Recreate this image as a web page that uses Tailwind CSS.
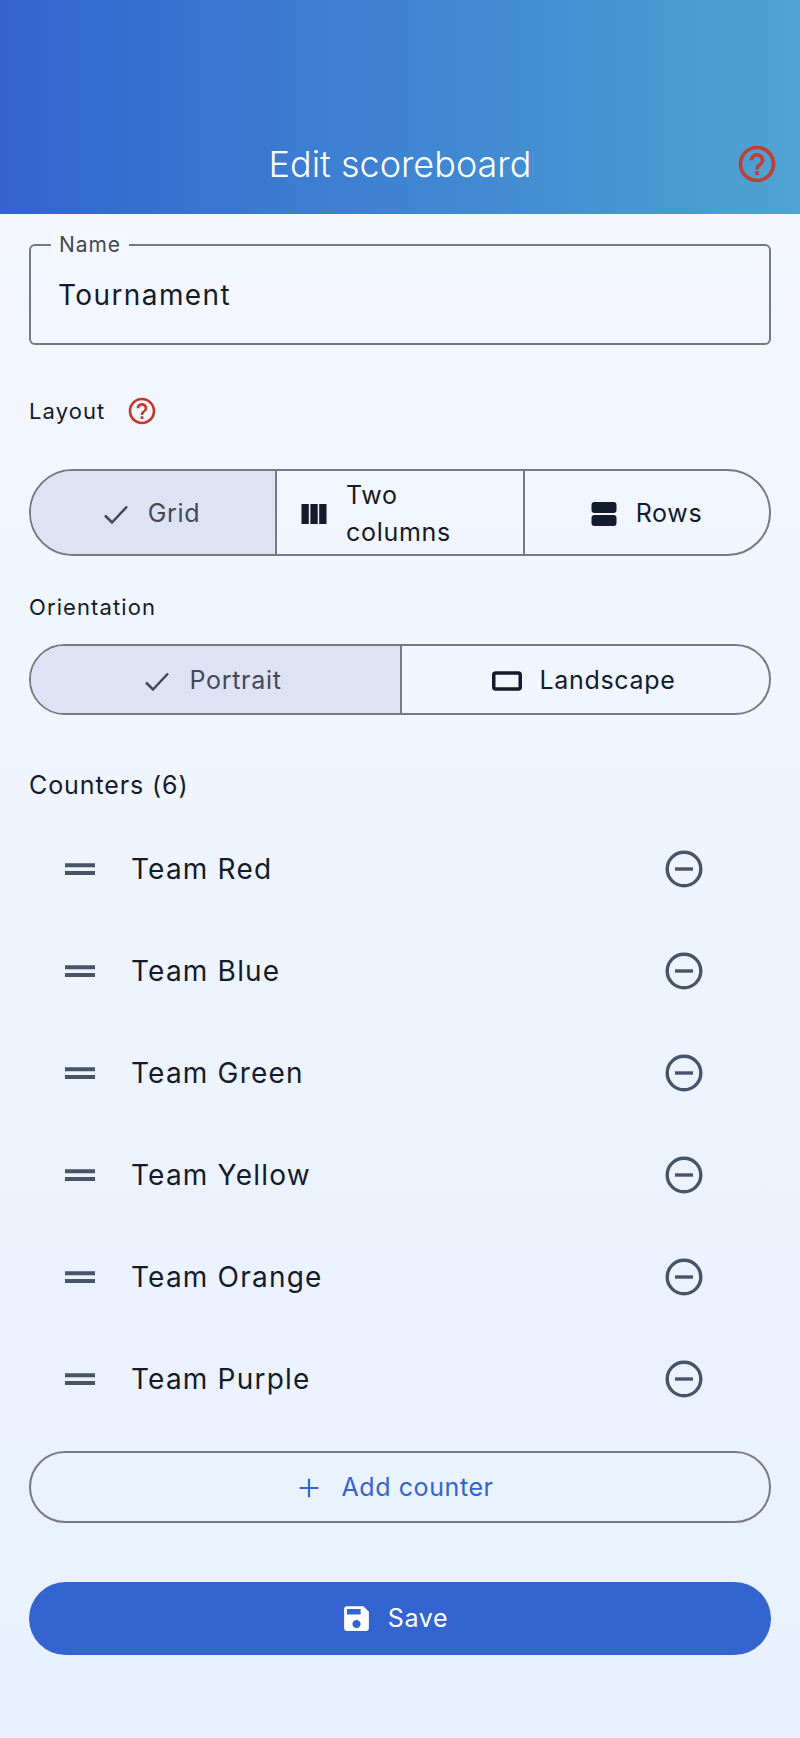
<!DOCTYPE html>
<html lang="en">
<head>
    <meta charset="UTF-8">
    <meta name="viewport" content="width=device-width, initial-scale=1.0">
    <title>Edit scoreboard</title>
    <script src="https://cdn.jsdelivr.net/npm/@tailwindcss/browser@4"></script>
</head>
<body class="w-[800px] h-[1738px] overflow-hidden flex flex-col bg-gradient-to-b from-[#f6f8ff] to-[#e8f1fd] font-['Inter',sans-serif] text-[#141b2c]">

    <!-- Header -->
    <header class="relative h-[214px] shrink-0 bg-gradient-to-r from-[#3463d0] to-[#4fa3d2] flex items-end justify-center pb-[22px]">
        <h1 class="text-[36px] leading-[56px] font-light text-white">Edit scoreboard</h1>
        <svg class="absolute right-[21px] top-[142px] w-[44px] h-[44px]" viewBox="0 0 24 24" fill="#bf3f35">
            <path d="M11 18h2v-2h-2v2zm1-16C6.48 2 2 6.48 2 12s4.48 10 10 10 10-4.48 10-10S17.52 2 12 2zm0 18c-4.41 0-8-3.59-8-8s3.59-8 8-8 8 3.59 8 8-3.59 8-8 8zm0-14c-2.21 0-4 1.79-4 4h2c0-1.1.9-2 2-2s2 .9 2 2c0 2-3 1.75-3 5h2c0-2.25 3-2.5 3-5 0-2.21-1.79-4-4-4z"/>
        </svg>
    </header>

    <main class="px-[29px] flex flex-col">
        <!-- Name field -->
        <div class="relative mt-[30px] h-[101px] border-2 border-[#767a83] rounded-[6px] flex items-center pl-[27px] text-[28px] tracking-[1.4px]">
            <span class="absolute left-[20px] top-[-13px] px-[8px] bg-[#f5f8ff] text-[21px] leading-[24px] tracking-[0.9px] text-[#444955]">Name</span>
            Tournament
        </div>

        <!-- Layout -->
        <div class="flex items-center mt-[46px] h-[40px]">
            <span class="text-[22px] tracking-[1.1px]">Layout</span>
            <svg class="ml-[21px] w-[32px] h-[32px]" viewBox="0 0 24 24" fill="#c0392b">
                <path d="M11 18h2v-2h-2v2zm1-16C6.48 2 2 6.48 2 12s4.48 10 10 10 10-4.48 10-10S17.52 2 12 2zm0 18c-4.41 0-8-3.59-8-8s3.59-8 8-8 8 3.59 8 8-3.59 8-8 8zm0-14c-2.21 0-4 1.79-4 4h2c0-1.1.9-2 2-2s2 .9 2 2c0 2-3 1.75-3 5h2c0-2.25 3-2.5 3-5 0-2.21-1.79-4-4-4z"/>
            </svg>
        </div>

        <div class="mt-[38px] h-[87px] grid grid-cols-3 border-2 border-[#767a83] rounded-full overflow-hidden text-[25px] tracking-[0.7px]">
            <div class="flex items-center justify-center gap-[16px] pt-[2px] pr-[6px] bg-[#dde2f5] text-[#444955] border-r-2 border-[#767a83]">
                <svg class="w-[32px] h-[32px]" viewBox="0 0 32 32" fill="none" stroke="#444955" stroke-width="2.500"><path d="M5 17.500l7 7L27 8.500"/></svg>
                Grid
            </div>
            <div class="flex items-center gap-[16px] pt-[2px] pl-[21px] leading-[37px]">
                <svg class="w-[32px] h-[32px] shrink-0" viewBox="0 0 32 32" fill="#141b2c"><path d="M3.500 6h7.300v20H3.500zM12.400 6h7.300v20h-7.300zM21.200 6h7.300v20h-7.300z"/></svg>
                <span>Two<br>columns</span>
            </div>
            <div class="flex items-center justify-center gap-[16px] pt-[2px] pr-[4px] border-l-2 border-[#767a83]">
                <svg class="w-[32px] h-[32px]" viewBox="0 0 32 32" fill="#141b2c"><rect x="3.500" y="4" width="25" height="11" rx="3"/><rect x="3.500" y="17" width="25" height="11" rx="3"/></svg>
                Rows
            </div>
        </div>

        <!-- Orientation -->
        <div class="mt-[36px] h-[30px] flex items-center text-[22px] tracking-[1.1px]">Orientation</div>
        <div class="mt-[22px] h-[71px] grid grid-cols-2 border-2 border-[#767a83] rounded-full overflow-hidden text-[25px] tracking-[0.7px]">
            <div class="flex items-center justify-center gap-[16px] pt-[2px] pr-[8px] bg-[#dde2f5] text-[#444955]">
                <svg class="w-[32px] h-[32px]" viewBox="0 0 32 32" fill="none" stroke="#444955" stroke-width="2.500"><path d="M5 17.500l7 7L27 8.500"/></svg>
                Portrait
            </div>
            <div class="flex items-center justify-center gap-[16px] pt-[2px] pr-[4px] border-l-2 border-[#767a83]">
                <svg class="w-[32px] h-[32px]" viewBox="0 0 32 32" fill="none" stroke="#141b2c" stroke-width="3.500"><rect x="2.750" y="8" width="26.500" height="16" rx="2"/></svg>
                Landscape
            </div>
        </div>

        <!-- Counters -->
        <div class="mt-[54px] h-[34px] flex items-center text-[25px] tracking-[0.9px]">Counters (6)</div>
        <ul class="mt-[15px] flex flex-col text-[28px] tracking-[1.2px]">
            <li class="h-[102px] flex items-center pl-[36px] pr-[67px]">
                <svg class="w-[30px] h-[32px] mr-[36px]" viewBox="0 0 30 32" fill="#4a5468"><path d="M0 10.300h30v4H0zM0 18h30v4H0z"/></svg>
                <span class="flex-1">Team Red</span>
                <svg class="w-[40px] h-[40px]" viewBox="0 0 40 40" fill="none" stroke="#4a5468" stroke-width="3.400"><circle cx="20" cy="20" r="16.800"/><path d="M11 20h18"/></svg>
            </li>
            <li class="h-[102px] flex items-center pl-[36px] pr-[67px]">
                <svg class="w-[30px] h-[32px] mr-[36px]" viewBox="0 0 30 32" fill="#4a5468"><path d="M0 10.300h30v4H0zM0 18h30v4H0z"/></svg>
                <span class="flex-1">Team Blue</span>
                <svg class="w-[40px] h-[40px]" viewBox="0 0 40 40" fill="none" stroke="#4a5468" stroke-width="3.400"><circle cx="20" cy="20" r="16.800"/><path d="M11 20h18"/></svg>
            </li>
            <li class="h-[102px] flex items-center pl-[36px] pr-[67px]">
                <svg class="w-[30px] h-[32px] mr-[36px]" viewBox="0 0 30 32" fill="#4a5468"><path d="M0 10.300h30v4H0zM0 18h30v4H0z"/></svg>
                <span class="flex-1">Team Green</span>
                <svg class="w-[40px] h-[40px]" viewBox="0 0 40 40" fill="none" stroke="#4a5468" stroke-width="3.400"><circle cx="20" cy="20" r="16.800"/><path d="M11 20h18"/></svg>
            </li>
            <li class="h-[102px] flex items-center pl-[36px] pr-[67px]">
                <svg class="w-[30px] h-[32px] mr-[36px]" viewBox="0 0 30 32" fill="#4a5468"><path d="M0 10.300h30v4H0zM0 18h30v4H0z"/></svg>
                <span class="flex-1">Team Yellow</span>
                <svg class="w-[40px] h-[40px]" viewBox="0 0 40 40" fill="none" stroke="#4a5468" stroke-width="3.400"><circle cx="20" cy="20" r="16.800"/><path d="M11 20h18"/></svg>
            </li>
            <li class="h-[102px] flex items-center pl-[36px] pr-[67px]">
                <svg class="w-[30px] h-[32px] mr-[36px]" viewBox="0 0 30 32" fill="#4a5468"><path d="M0 10.300h30v4H0zM0 18h30v4H0z"/></svg>
                <span class="flex-1">Team Orange</span>
                <svg class="w-[40px] h-[40px]" viewBox="0 0 40 40" fill="none" stroke="#4a5468" stroke-width="3.400"><circle cx="20" cy="20" r="16.800"/><path d="M11 20h18"/></svg>
            </li>
            <li class="h-[102px] flex items-center pl-[36px] pr-[67px]">
                <svg class="w-[30px] h-[32px] mr-[36px]" viewBox="0 0 30 32" fill="#4a5468"><path d="M0 10.300h30v4H0zM0 18h30v4H0z"/></svg>
                <span class="flex-1">Team Purple</span>
                <svg class="w-[40px] h-[40px]" viewBox="0 0 40 40" fill="none" stroke="#4a5468" stroke-width="3.400"><circle cx="20" cy="20" r="16.800"/><path d="M11 20h18"/></svg>
            </li>
        </ul>

        <!-- Actions -->
        <button class="mt-[21px] h-[72px] border-2 border-[#767a83] rounded-full flex items-center justify-center gap-[16px] pt-[2px] pr-[13px] text-[25px] tracking-[0.6px] text-[#3364d0]">
            <svg class="w-[32px] h-[32px]" viewBox="0 0 24 24" fill="#3364d0"><path d="M19 12.800h-6.200V19h-1.600v-6.200H5v-1.600h6.200V5h1.600v6.200H19v1.600z"/></svg>
            Add counter
        </button>
        <button class="mt-[59px] h-[73px] bg-[#3364d0] rounded-full flex items-center justify-center gap-[15px] pr-[12px] text-[25px] tracking-[0.7px] text-white">
            <svg class="w-[33px] h-[33px]" viewBox="0 0 24 24" fill="#ffffff"><path d="M17 3H5c-1.110 0-2 .9-2 2v14c0 1.100.89 2 2 2h14c1.100 0 2-.9 2-2V7l-4-4zm-5 16c-1.660 0-3-1.340-3-3s1.340-3 3-3 3 1.340 3 3-1.340 3-3 3zm3-10H5V5h10v4z"/></svg>
            Save
        </button>
    </main>
</body>
</html>
